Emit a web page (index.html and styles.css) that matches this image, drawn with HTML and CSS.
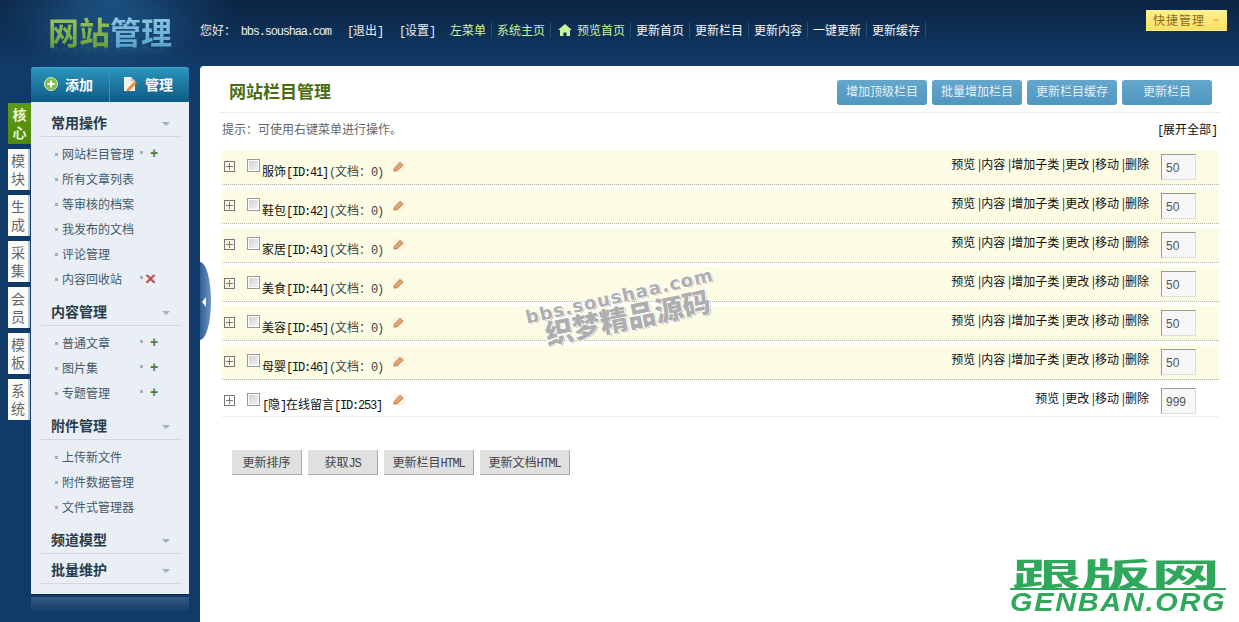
FILE: index.html
```html
<!DOCTYPE html>
<html lang="zh">
<head>
<meta charset="utf-8">
<title>网站栏目管理</title>
<link rel="stylesheet" href="styles.css">
</head>
<body>
<header class="top">
  <div class="logo"><span class="logo-a">网站</span><span class="logo-b">管理</span></div>
  <div class="welcome">您好： <span class="mono host">bbs.soushaa.com</span></div>
  <a class="tl tl-first"><span class="mono">[</span>退出<span class="mono">]</span></a>
  <a class="tl tl-set"><span class="mono">[</span>设置<span class="mono">]</span></a>
  <nav class="nav">
    <a class="ni green">左菜单</a>
    <a class="ni green">系统主页</a>
    <a class="ni green home"><svg class="house" viewBox="0 0 14 12"><path d="M7 0 14 6H12V12H8.500V8.500H5.500V12H2V6H0Z" fill="#c9f59a"/></svg>预览首页</a>
    <a class="ni">更新首页</a>
    <a class="ni">更新栏目</a>
    <a class="ni">更新内容</a>
    <a class="ni">一键更新</a>
    <a class="ni">更新缓存</a>
  </nav>
  <div class="quick">快捷管理<i class="quick-arrow"></i></div>
</header>
<div class="main">
  <aside class="side">
    <div class="tabs">
      <a class="tab on">核<br>心</a>
      <a class="tab">模<br>块</a>
      <a class="tab">生<br>成</a>
      <a class="tab">采<br>集</a>
      <a class="tab">会<br>员</a>
      <a class="tab">模<br>板</a>
      <a class="tab">系<br>统</a>
    </div>
    <div class="menu-wrap">
      <div class="heads">
        <div class="head h-add">
          <svg class="hi" viewBox="0 0 14 14"><circle cx="7" cy="7" r="6.500" fill="#7cc04a" stroke="#d8efb8"/><path d="M7 3.500V10.500M3.500 7H10.500" stroke="#fff" stroke-width="2"/></svg>添加
        </div>
        <div class="head h-man">
          <svg class="hi" viewBox="0 0 14 16"><path d="M1 1H8L12 5V15H1Z" fill="#f2f2e8"/><path d="M8 1 12 5H8Z" fill="#bbb"/><path d="M4 13 12 5 14 7 6 15 3.500 15.500Z" fill="#e0903c"/></svg>管理
        </div>
      </div>
      <div class="panel">
        <h3 class="gh">常用操作<i class="tri"></i></h3>
        <ul class="items">
          <li class="it"><span>网站栏目管理</span><i class="dot"></i><b class="plus">+</b></li>
          <li class="it"><span>所有文章列表</span></li>
          <li class="it"><span>等审核的档案</span></li>
          <li class="it"><span>我发布的文档</span></li>
          <li class="it"><span>评论管理</span></li>
          <li class="it"><span>内容回收站</span><i class="dot"></i><b class="del">×</b></li>
        </ul>
        <h3 class="gh gap">内容管理<i class="tri"></i></h3>
        <ul class="items">
          <li class="it"><span>普通文章</span><i class="dot"></i><b class="plus">+</b></li>
          <li class="it"><span>图片集</span><i class="dot"></i><b class="plus">+</b></li>
          <li class="it"><span>专题管理</span><i class="dot"></i><b class="plus">+</b></li>
        </ul>
        <h3 class="gh gap">附件管理<i class="tri"></i></h3>
        <ul class="items">
          <li class="it"><span>上传新文件</span></li>
          <li class="it"><span>附件数据管理</span></li>
          <li class="it"><span>文件式管理器</span></li>
        </ul>
        <h3 class="gh gap">频道模型<i class="tri"></i></h3>
        <h3 class="gh gap-s">批量维护<i class="tri"></i></h3>
      </div>
      <div class="panel-foot"></div>
    </div>
  </aside>
  <main class="content">
    <div class="handle"><i class="handle-arrow"></i></div>
    <div class="title-bar">
      <h1 class="title">网站栏目管理</h1>
      <div class="btns">
        <a class="bb">增加顶级栏目</a>
        <a class="bb">批量增加栏目</a>
        <a class="bb">更新栏目缓存</a>
        <a class="bb">更新栏目</a>
      </div>
    </div>
    <div class="hint-bar">
      <span class="hint">提示：可使用右键菜单进行操作。</span>
      <a class="all"><span class="mono">[</span>展开全部<span class="mono">]</span></a>
    </div>
    <div class="rows">
      <div class="row">
        <i class="exp"></i><i class="chk"></i>
        <div class="name">服饰<span class="mono">[ID:41]</span><span class="doc"><span class="mono">(</span>文档：<span class="mono">0)</span></span></div>
        <svg class="pen" viewBox="0 0 12 12"><rect width="12" height="12" fill="#fbf3df"/><path d="M1.500 8 7.500 1.500 11 4.500 4.500 10.500 1 11Z" fill="#e6a56e" stroke="#a8683c" stroke-width=".8"/></svg>
        <div class="acts">预览 |内容 |增加子类 |更改 |移动 |删除</div><span class="rank">50</span>
      </div>
      <div class="row">
        <i class="exp"></i><i class="chk"></i>
        <div class="name">鞋包<span class="mono">[ID:42]</span><span class="doc"><span class="mono">(</span>文档：<span class="mono">0)</span></span></div>
        <svg class="pen" viewBox="0 0 12 12"><rect width="12" height="12" fill="#fbf3df"/><path d="M1.500 8 7.500 1.500 11 4.500 4.500 10.500 1 11Z" fill="#e6a56e" stroke="#a8683c" stroke-width=".8"/></svg>
        <div class="acts">预览 |内容 |增加子类 |更改 |移动 |删除</div><span class="rank">50</span>
      </div>
      <div class="row">
        <i class="exp"></i><i class="chk"></i>
        <div class="name">家居<span class="mono">[ID:43]</span><span class="doc"><span class="mono">(</span>文档：<span class="mono">0)</span></span></div>
        <svg class="pen" viewBox="0 0 12 12"><rect width="12" height="12" fill="#fbf3df"/><path d="M1.500 8 7.500 1.500 11 4.500 4.500 10.500 1 11Z" fill="#e6a56e" stroke="#a8683c" stroke-width=".8"/></svg>
        <div class="acts">预览 |内容 |增加子类 |更改 |移动 |删除</div><span class="rank">50</span>
      </div>
      <div class="row">
        <i class="exp"></i><i class="chk"></i>
        <div class="name">美食<span class="mono">[ID:44]</span><span class="doc"><span class="mono">(</span>文档：<span class="mono">0)</span></span></div>
        <svg class="pen" viewBox="0 0 12 12"><rect width="12" height="12" fill="#fbf3df"/><path d="M1.500 8 7.500 1.500 11 4.500 4.500 10.500 1 11Z" fill="#e6a56e" stroke="#a8683c" stroke-width=".8"/></svg>
        <div class="acts">预览 |内容 |增加子类 |更改 |移动 |删除</div><span class="rank">50</span>
      </div>
      <div class="row">
        <i class="exp"></i><i class="chk"></i>
        <div class="name">美容<span class="mono">[ID:45]</span><span class="doc"><span class="mono">(</span>文档：<span class="mono">0)</span></span></div>
        <svg class="pen" viewBox="0 0 12 12"><rect width="12" height="12" fill="#fbf3df"/><path d="M1.500 8 7.500 1.500 11 4.500 4.500 10.500 1 11Z" fill="#e6a56e" stroke="#a8683c" stroke-width=".8"/></svg>
        <div class="acts">预览 |内容 |增加子类 |更改 |移动 |删除</div><span class="rank">50</span>
      </div>
      <div class="row">
        <i class="exp"></i><i class="chk"></i>
        <div class="name">母婴<span class="mono">[ID:46]</span><span class="doc"><span class="mono">(</span>文档：<span class="mono">0)</span></span></div>
        <svg class="pen" viewBox="0 0 12 12"><rect width="12" height="12" fill="#fbf3df"/><path d="M1.500 8 7.500 1.500 11 4.500 4.500 10.500 1 11Z" fill="#e6a56e" stroke="#a8683c" stroke-width=".8"/></svg>
        <div class="acts">预览 |内容 |增加子类 |更改 |移动 |删除</div><span class="rank">50</span>
      </div>
      <div class="row row-plain">
        <i class="exp"></i><i class="chk"></i>
        <div class="name"><span class="mono">[</span>隐<span class="mono">]</span>在线留言<span class="mono">[ID:253]</span></div>
        <svg class="pen" viewBox="0 0 12 12"><rect width="12" height="12" fill="#fbf3df"/><path d="M1.500 8 7.500 1.500 11 4.500 4.500 10.500 1 11Z" fill="#e6a56e" stroke="#a8683c" stroke-width=".8"/></svg>
        <div class="acts">预览 |更改 |移动 |删除</div><span class="rank">999</span>
      </div>
    </div>
    <div class="foot-btns">
      <a class="gb">更新排序</a>
      <a class="gb">获取<span class="mono">JS</span></a>
      <a class="gb gb-w">更新栏目<span class="mono">HTML</span></a>
      <a class="gb gb-w">更新文档<span class="mono">HTML</span></a>
    </div>
    <div class="wm wm-a">bbs.soushaa.com</div>
    <div class="wm wm-b">织梦精品源码</div>
    <div class="gl">
      <div class="gl-cn"><span class="gl-cn-in">跟版网</span></div>
      <div class="gl-en">GENBAN.ORG</div>
    </div>
  </main>
</div>
</body>
</html>
```

FILE: styles.css
```css
* { box-sizing: border-box; }
html, body { margin: 0; padding: 0; height: 622px; overflow: hidden; }
body {
  background: #103a67;
  font: 12px/16px "Noto Sans CJK SC", "Liberation Sans", sans-serif;
  color: #222;
}
ul { list-style: none; margin: 0; padding: 0; }
h1, h3 { margin: 0; }
i { display: block; font-style: normal; }
.mono { font-family: "Liberation Mono", "DejaVu Sans Mono", monospace; font-size: 12px; letter-spacing: -1.200px; }
.host { margin-left: 2px; }

/* top bar */
.top {
  height: 66px;
  display: flex;
  align-items: flex-start;
  background:
    radial-gradient(ellipse 130px 60px at 110px 0, rgba(40,110,170,.55), rgba(40,110,170,0)),
    radial-gradient(ellipse 90px 45px at 110px 35px, rgba(30,90,140,.5), rgba(30,90,140,0)),
    linear-gradient(#0a2341, #123c69);
  color: #e8f0f6;
}
.logo {
  width: 200px;
  padding: 13px 0 0 48px;
  font-size: 31px;
  line-height: 36px;
  font-weight: 700;
  white-space: nowrap;
  -webkit-box-reflect: below -8px linear-gradient(transparent 70%, rgba(255,255,255,.18));
}
.logo-a {
  background: linear-gradient(#a8cf6a, #5f9a30);
  -webkit-background-clip: text;
  background-clip: text;
  color: transparent;
}
.logo-b {
  background: linear-gradient(#9ad0e6, #4f9dc8);
  -webkit-background-clip: text;
  background-clip: text;
  color: transparent;
}
.welcome { margin-top: 22px; width: 147px; white-space: pre; }
.tl { margin-top: 22px; width: 52px; }
.tl-set { width: 51px; }
.nav { display: flex; margin-top: 22px; }
.ni {
  display: flex;
  align-items: center;
  height: 16px;
  padding-right: 5px;
  margin-right: 5px;
  border-right: 1px solid #224f78;
  color: #f4f7fa;
  white-space: nowrap;
}
.ni.green { color: #c9f59a; }
.house { width: 14px; height: 12px; margin: 0 5px 0 2px; }
.quick {
  position: absolute;
  left: 1146px;
  top: 10px;
  width: 81px;
  height: 21px;
  padding-left: 7px;
  background: linear-gradient(#fdf28e, #f9e064);
  border-bottom: 1px solid #f4ee9a;
  color: #8b6a24;
  letter-spacing: 1px;
  line-height: 19px;
}
.quick-arrow {
  position: absolute;
  left: 66px;
  top: 9px;
  border: 4px solid transparent;
  border-top: 4px solid #eec46a;
  border-bottom: 0;
  width: 0;
}

/* layout */
.main { display: flex; height: 556px; }
.side { width: 200px; display: flex; padding-left: 8px; flex: none; }
.tabs { width: 23px; padding-top: 37px; display: flex; flex-direction: column; gap: 5px; }
.tab {
  width: 22px;
  height: 41px;
  background: #fbfbfa;
  border-right: 2px solid #bcc6cf;
  color: #666;
  font-size: 14px;
  line-height: 18px;
  text-align: center;
  padding-top: 2px;
}
.tab.on {
  background: linear-gradient(#5f9c14, #4e8a0c);
  border-right: 0;
  width: 23px;
  color: #e8f4d0;
  font-weight: 700;
}
.menu-wrap { width: 158px; padding-top: 1px; }
.heads {
  display: flex;
  height: 35px;
  background: linear-gradient(#2b95bd, #0f5a87);
  border-radius: 3px 3px 0 0;
  border-top: 1px solid #3fa5c8;
}
.head {
  display: flex;
  align-items: center;
  padding-bottom: 3px;
  color: #fff;
  font-size: 14px;
  font-weight: 700;
}
.h-add { width: 79px; padding-left: 13px; border-right: 1px solid #3d90b5; }
.h-man { padding-left: 13px; }
.hi { width: 14px; height: 14px; margin-right: 7px; flex: none; }
.h-man .hi { height: 16px; margin-right: 8px; }
.panel {
  height: 493px;
  padding: 8px 7px 0 11px;
  background: #e9eff5;
  border-bottom: 1px solid #0a2a4a;
}
.gh {
  position: relative;
  height: 27px;
  margin-left: -1px;
  padding-left: 10px;
  font-size: 14px;
  line-height: 25px;
  color: #2a3b49;
  font-weight: 700;
  border-bottom: 1px solid #cfd9e4;
}
.gap { margin-top: 7px; }
.gap-s { margin-top: 3px; }
.tri {
  position: absolute;
  right: 12px;
  top: 12px;
  width: 0;
  border: 4px solid transparent;
  border-top: 4px solid #9fb0bf;
  border-bottom: 0;
}
.items { padding-top: 5px; }
.it {
  display: flex;
  align-items: center;
  height: 25px;
  padding-bottom: 2px;
  color: #44596b;
  position: relative;
  padding-left: 20px;
  white-space: nowrap;
}
.it::before {
  content: "";
  position: absolute;
  left: 13px;
  top: 11px;
  width: 3px;
  height: 3px;
  background: #9fb2c2;
}
.it span { width: 76px; flex: none; }
.dot { width: 3px; height: 3px; background: #9fb2c2; margin: -2px 0 0 2px; flex: none; }
.it b { font-size: 14px; line-height: 14px; margin: -2px 0 0 7px; font-family: "Liberation Sans", sans-serif; }
.plus { color: #4f7a3a; font-weight: 700; }
.it .del { color: #c0504d; font-weight: 700; font-size: 19px; margin: 0 0 0 2px; }
.panel-foot {
  height: 14px;
  margin-top: 2px;
  background: linear-gradient(#38597f, #16406b);
}

/* content */
.content {
  position: relative;
  flex: 1;
  background: #fff;
  border-radius: 4px 0 0 0;
  padding-left: 19px;
}
.handle {
  position: absolute;
  left: 0;
  top: 196px;
  width: 11px;
  height: 78px;
  background: linear-gradient(90deg, #2f5f95, #6d94c0);
  border-radius: 0 11px 11px 0 / 0 39px 39px 0;
}
.handle-arrow {
  position: absolute;
  left: 2px;
  top: 35px;
  width: 0;
  border: 5px solid transparent;
  border-right: 4px solid #fff;
  border-left: 0;
}
.title-bar {
  display: flex;
  align-items: flex-start;
  justify-content: space-between;
  width: 1002px;
  height: 47px;
  padding: 14px 9px 0 10px;
  border-bottom: 1px solid #eee;
}
.title { font-size: 17px; line-height: 24px; margin-top: -1px; font-weight: 700; color: #4b6c12; }
.btns { display: flex; gap: 5px; }
.bb {
  width: 90px;
  height: 25px;
  border-radius: 3px;
  background: linear-gradient(#65a6cc, #4f97c0);
  color: #e6f1f7;
  text-align: center;
  line-height: 21px;
}
.hint-bar {
  display: flex;
  justify-content: space-between;
  width: 998px;
  padding: 8px 0 0 3px;
  height: 37px;
}
.hint { color: #666; }
.all { color: #111; }
.rows { margin-left: 3px; width: 997px; }
.row {
  display: flex;
  align-items: flex-start;
  position: relative;
  height: 35px;
  margin-bottom: 4px;
  background: #fcfbe3;
  border-bottom: 1px dotted #b5b5a5;
}
.row-plain { background: #fff; border-bottom: 1px solid #eee; height: 33px; }
.exp {
  position: relative;
  width: 11px;
  height: 11px;
  margin: 11px 0 0 2px;
  border: 1px solid #777;
  background: linear-gradient(#777, #777) center / 7px 1px no-repeat, linear-gradient(#777, #777) center / 1px 7px no-repeat;
  flex: none;
}
.chk {
  width: 13px;
  height: 13px;
  margin: 9px 0 0 12px;
  border: 1px solid #999;
  background: linear-gradient(135deg, #d0d0d0, #f5f5f5);
  box-shadow: inset 0 0 0 1px #fff;
  flex: none;
}
.name { margin: 13px 0 0 2px; color: #111; white-space: nowrap; width: 131px; flex: none; }
.row-plain .name { margin-top: 12px; }
.doc { color: #444; margin-left: 1px; }
.pen { width: 11px; height: 11px; margin-top: 11px; flex: none; }
.row-plain .pen { margin-top: 10px; }
.acts { margin: 6px 12px 0 auto; white-space: pre; color: #111; }
.rank {
  width: 35px;
  height: 26px;
  margin: 4px 23px 0 0;
  padding: 5px 0 0 4px;
  background: #f7f7f7;
  border: 1px solid #ddd;
  border-top-color: #999;
  border-left-color: #999;
  color: #555;
  font-family: "Liberation Sans", sans-serif;
}
.foot-btns { display: flex; gap: 6px; margin: 33px 0 0 13px; }
.gb {
  width: 70px;
  height: 25px;
  background: #e0e0e0;
  border-right: 1px solid #aaa;
  border-bottom: 1px solid #aaa;
  color: #444;
  text-align: center;
  line-height: 23px;
}
.gb-w { width: 90px; }

/* overlays */
.wm {
  position: absolute;
  color: #aeaeae;
  white-space: nowrap;
  transform-origin: 0 50%;
  text-shadow: 1px 0 #fff, -1px 0 #fff, 0 1px #fff, 0 -1px #fff, 1px 1px #8e8e8e;
}
.wm-a { left: 326px; top: 240px; font: 700 18px/24px "DejaVu Sans", sans-serif; letter-spacing: 1.100px; transform: rotate(-13deg); }
.wm-b { left: 345px; top: 251px; font-size: 28px; line-height: 32px; font-weight: 900; transform: rotate(-11.500deg); }
.gl { position: absolute; left: 810px; top: 490px; width: 216px; color: #2fa85c; }
.gl-cn {
  height: 34px;
  padding-left: 2px;
  border-bottom: 2px solid #2fa85c;
}
.gl-cn-in {
  display: block;
  width: 96px;
  font-size: 32px;
  line-height: 32px;
  font-weight: 700;
  white-space: nowrap;
  transform: scaleX(2.170);
  transform-origin: 0 50%;
}
.gl-en {
  width: 186px;
  font: italic 700 25px/24px "Liberation Sans", sans-serif;
  letter-spacing: 1.500px;
  white-space: nowrap;
  transform: scaleX(1.155);
  transform-origin: 0 50%;
}
```
